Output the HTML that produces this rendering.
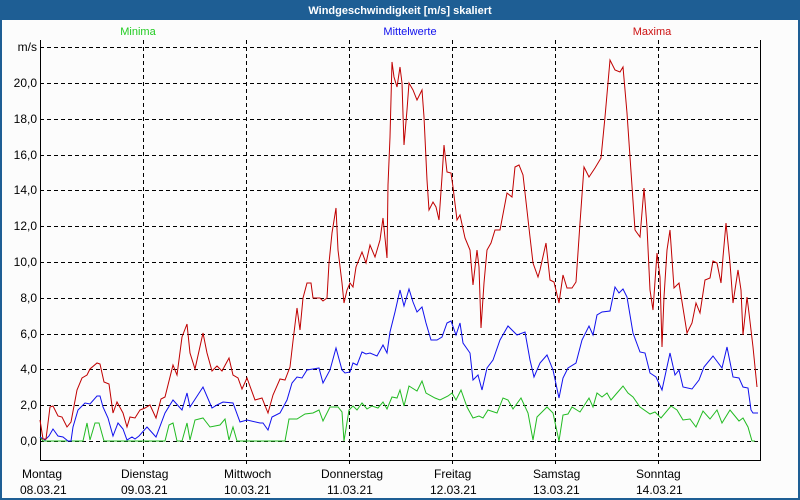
<!DOCTYPE html>
<html><head><meta charset="utf-8"><style>
html,body{margin:0;padding:0;width:800px;height:500px;overflow:hidden;background:#1e5e94}
svg{display:block;font-family:"Liberation Sans",sans-serif}
</style></head><body>
<svg width="800" height="500" xmlns="http://www.w3.org/2000/svg">
<rect x="0" y="0" width="800" height="500" fill="#1e5e94"/>
<rect x="2" y="20" width="796" height="478" fill="#fcfcfc"/>
<text x="400" y="14" fill="#fff" font-size="11" font-weight="bold" text-anchor="middle">Windgeschwindigkeit [m/s] skaliert</text>
<text x="138" y="35" fill="#22cc22" font-size="11" text-anchor="middle">Minima</text>
<text x="410" y="35" fill="#1010ee" font-size="11" text-anchor="middle">Mittelwerte</text>
<text x="652" y="35" fill="#cc1111" font-size="11" text-anchor="middle">Maxima</text>
<g stroke="#000" stroke-width="1" stroke-dasharray="4,3" fill="none">
<path d="M40 47.5H760M40 83.5H760M40 119.5H760M40 155.5H760M40 190.5H760M40 226.5H760M40 262.5H760M40 298.5H760M40 334.5H760M40 369.5H760M40 405.5H760M40 441.5H760"/>
<path d="M143.5 40V466M246.5 40V466M349.5 40V466M452.5 40V466M555.5 40V466M658.5 40V466"/>
</g>
<path d="M40.5 40V460.5H760.5V40" stroke="#000" fill="none"/>
<g font-size="12" fill="#000" text-anchor="end">
<text x="37" y="51">m/s</text><text x="37" y="87">20,0</text><text x="37" y="123">18,0</text><text x="37" y="159">16,0</text><text x="37" y="194">14,0</text><text x="37" y="230">12,0</text><text x="37" y="266">10,0</text><text x="37" y="302">8,0</text><text x="37" y="338">6,0</text><text x="37" y="373">4,0</text><text x="37" y="409">2,0</text><text x="37" y="445">0,0</text>
</g>
<g font-size="12" fill="#000">
<text x="22" y="478">Montag</text><text x="20" y="494">08.03.21</text>
<text x="121" y="478">Dienstag</text><text x="121" y="494">09.03.21</text>
<text x="224" y="478">Mittwoch</text><text x="224" y="494">10.03.21</text>
<text x="321" y="478">Donnerstag</text><text x="327" y="494">11.03.21</text>
<text x="434" y="478">Freitag</text><text x="430" y="494">12.03.21</text>
<text x="533" y="478">Samstag</text><text x="533" y="494">13.03.21</text>
<text x="636" y="478">Sonntag</text><text x="636" y="494">14.03.21</text>
</g>
<polyline fill="none" stroke="#22bb22" stroke-width="1" points="40,437 43,441 83,441 87,423 90,440 95,423 99,423 104,441 165,441 169,425 173,423 177,441 182,441 187,423 190,440 195,420 203,418 210,427 220,425 225,419 229,440 233,427 237,441 285,441 289,419 297,419 305,414 313,413 319,410 323,421 330,407 338,407 342,412 344,441 349,410 353,406 357,410 362,403 367,409 372,406 378,408 383,402 387,409 392,397 397,398 400,390 404,406 409,386 417,391 422,381 426,393 435,398 440,400 448,396 452,393 456,400 461,390 467,407 473,418 479,416 483,418 488,410 497,413 503,398 508,400 513,409 521,398 528,413 533,440 537,417 547,407 553,413 559,441 563,415 568,414 572,407 580,412 589,398 593,407 597,393 602,397 607,393 611,400 617,393 623,386 628,393 633,397 640,407 650,414 655,412 661,418 671,406 677,410 683,420 690,419 696,427 703,411 710,419 717,410 722,423 730,410 739,421 743,418 748,427 752,441 755,441"/>
<polyline fill="none" stroke="#1010ee" stroke-width="1" points="40,437 45,440 49,436 53,429 58,436 63,437 68,441 71,441 73,427 78,410 85,403 90,404 97,396 100,396 103,407 108,418 113,436 118,423 123,429 127,440 132,437 135,439 139,436 147,427 156,437 165,413 173,400 182,410 187,393 190,407 203,387 212,408 217,405 223,402 233,403 240,422 247,420 260,423 263,423 268,430 272,417 280,413 287,400 292,383 297,377 302,378 307,370 313,369 319,368 323,383 330,370 336,348 342,370 345,373 350,372 353,363 357,365 362,352 366,354 370,353 377,356 383,345 387,353 390,332 395,312 400,290 404,306 409,289 413,302 417,312 422,307 426,323 431,340 437,340 442,337 447,323 451,321 456,335 460,323 463,343 470,353 473,380 478,375 482,390 487,368 493,360 500,340 508,326 517,335 525,332 530,360 534,377 540,363 547,355 553,370 559,398 563,378 568,368 576,363 582,340 589,326 593,335 597,315 602,312 610,311 615,287 619,293 623,289 627,297 633,333 640,352 645,353 650,373 656,377 662,390 670,353 675,375 679,370 683,387 692,389 699,380 704,367 713,356 722,368 727,347 733,377 739,378 743,387 748,388 751,410 753,413 758,413"/>
<polyline fill="none" stroke="#c00000" stroke-width="1" points="40,420 43,439 46,439 50,407 53,406 58,416 62,417 67,427 71,422 77,390 82,378 87,375 90,369 97,363 100,364 104,382 109,384 113,413 117,402 123,413 127,427 130,417 135,418 140,410 145,408 150,405 156,418 161,399 165,397 173,365 177,375 182,337 187,324 190,353 195,369 203,333 207,353 212,371 217,366 222,371 229,358 233,375 238,378 242,389 247,378 255,400 262,398 268,413 273,395 280,379 285,380 290,367 293,341 297,308 300,330 303,298 307,283 311,283 313,298 320,298 323,301 327,298 329,263 332,233 336,208 338,250 342,283 344,303 347,290 350,283 353,287 356,267 362,252 366,263 370,245 375,257 380,240 383,218 387,258 388,185 390,137 392,62 394,77 397,87 400,67 402,83 404,145 407,110 409,83 413,90 417,100 422,90 424,117 427,180 429,210 433,202 436,207 439,220 442,177 444,145 447,172 451,173 453,187 457,220 460,215 465,238 470,250 473,285 477,250 479,267 481,328 484,283 487,250 491,243 495,230 500,230 507,193 512,197 515,167 519,165 523,175 530,237 533,263 538,277 540,270 546,243 550,280 554,282 559,303 563,275 567,288 572,288 576,282 580,223 584,167 589,177 595,168 601,158 605,117 610,60 615,70 620,72 623,67 627,113 630,157 635,230 640,237 644,188 647,227 650,290 653,310 657,253 660,277 662,347 664,297 667,250 670,230 674,288 679,283 687,333 692,323 696,303 700,313 705,280 710,278 713,261 717,263 721,283 723,257 726,223 730,263 733,303 738,270 741,290 743,335 747,297 749,313 753,347 757,387"/>
</svg>
</body></html>
